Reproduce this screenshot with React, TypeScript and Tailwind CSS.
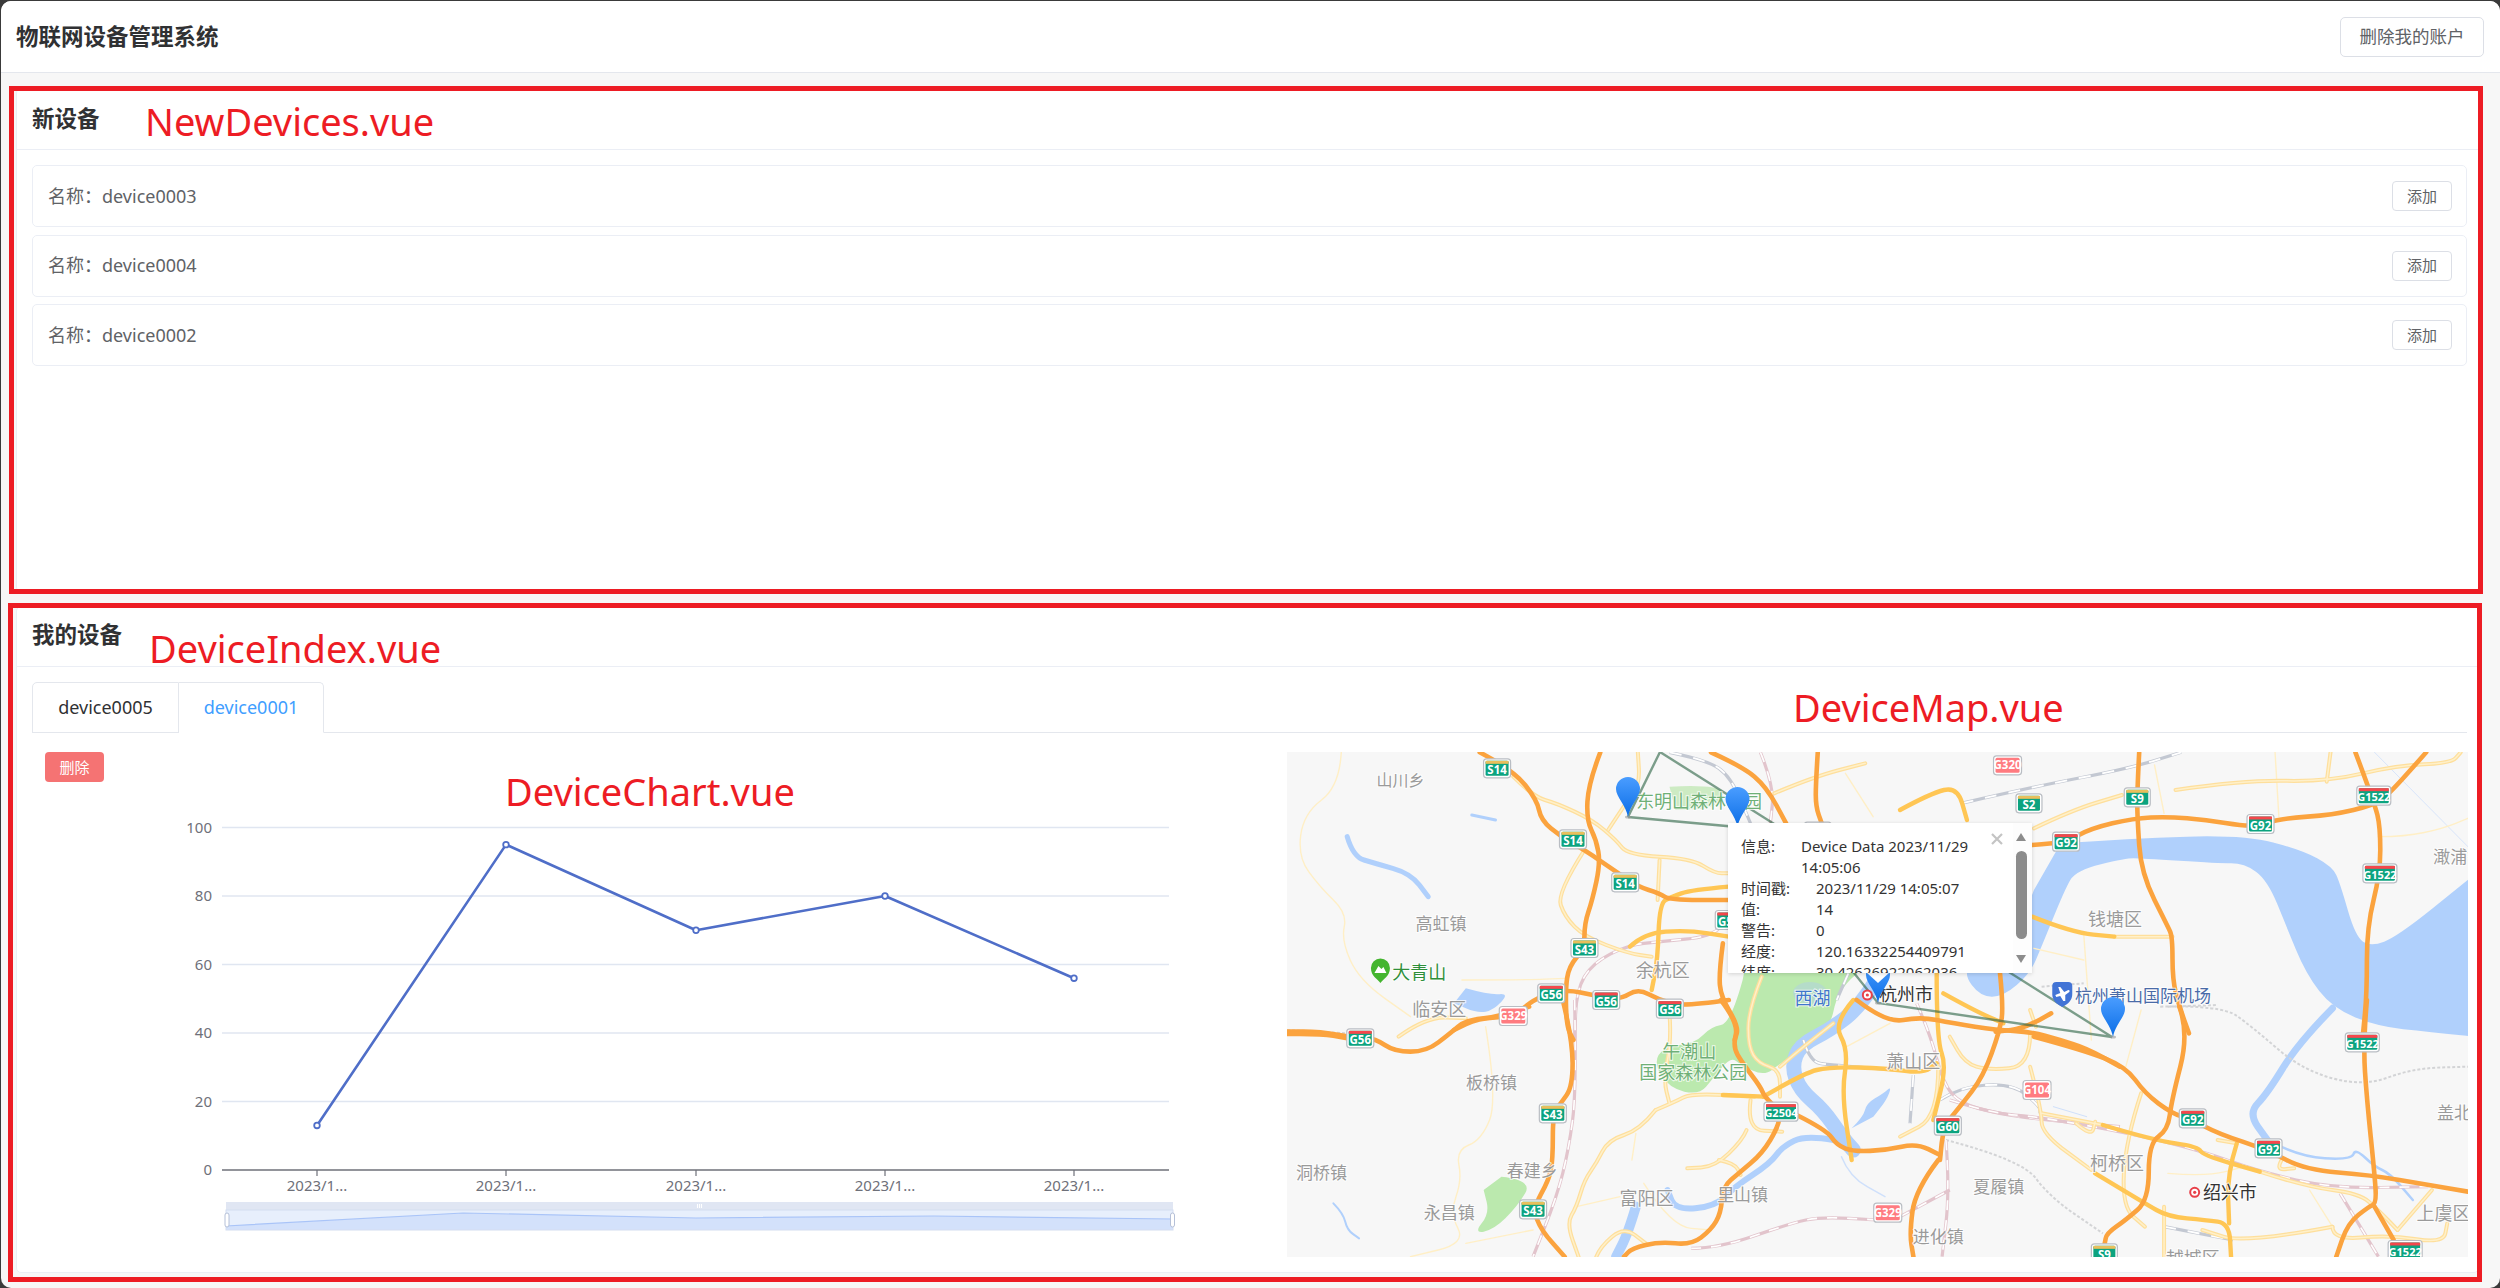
import React from "react";

type Q = 5 | 6 | 7 | 8 | 12;
const conv = (q: Q, x: number, y: number): [number, number] => {
  if (q === 5) return [1280 + x / 2.529, 740 + y / 3];
  if (q === 6) return [1900 + x / 2.613, 740 + y / 3];
  if (q === 7) return [1280 + x / 2.529, 1000 + y / 3];
  if (q === 8) return [1900 + x / 2.613, 1000 + y / 3];
  return [1720 + x / 3, 960 + y / 3];
};
const pts = (q: Q, s: string) =>
  s.trim().split(/\s+/).map((p) => {
    const [a, b] = p.split(",").map(Number);
    return conv(q, a, b);
  });
const smooth = (q: Q, s: string) => {
  const p = pts(q, s);
  if (p.length < 3) return `M${p.map((a) => a.join(" ")).join("L")}`;
  let d = `M${p[0][0]} ${p[0][1]}`;
  for (let i = 1; i < p.length - 1; i++) {
    const mx = (p[i][0] + p[i + 1][0]) / 2;
    const my = (p[i][1] + p[i + 1][1]) / 2;
    d += `Q${p[i][0]} ${p[i][1]} ${mx} ${my}`;
  }
  const l = p[p.length - 1];
  return d + `L${l[0]} ${l[1]}`;
};
const closed = (q: Q, s: string) => smooth(q, s) + "Z";

type R = [Q, string];
const orange: R[] = [
  [5, "505,37 590,90 650,180 660,240 710,290 770,330 850,395 905,440 960,460 985,480 1135,480"],
  [5, "810,37 780,130 775,240 800,300 810,370 790,480 770,550 770,625 730,680 722,750 725,860 742,900"],
  [7, "715,0 740,120 740,260 710,310 690,340 690,480 680,540 640,625 660,690 720,770"],
  [5, "1135,780 1020,800 960,780 905,745 860,780 790,765 730,750 686,760 640,780 590,830 500,835 440,870"],
  [7, "630,20 560,50 470,60 430,100 370,155 290,155 240,115 200,115 100,95 18,95"],
  [5, "1090,37 1170,80 1230,140 1280,250"],
  [5, "1360,37 1355,130 1355,200 1370,250"],
  [5, "1120,610 1110,700 1115,770 1160,860 1150,900"],
  [7, "1115,0 1160,70 1145,140 1170,190 1215,260 1225,290 1265,335 1260,380 1220,460 1160,520 1120,560 1115,640 1090,690 1040,735 960,725 890,745 870,770"],
  [12, "230,465 320,510 350,555 400,575 500,570 590,550 660,585"],
  [12, "410,120 500,190 600,170 700,190 830,210 930,215 1020,240 1100,265 1200,320"],
  [8, "350,110 480,150 590,200 640,280 710,340 765,360 830,400 960,450 1060,510 1230,525 1380,555 1484,575"],
  [12, "840,40 850,140 840,210 790,350 720,440 670,500 660,600"],
  [8, "100,480 40,570 25,700 35,770"],
  [8, "395,40 330,85 250,95"],
  [6, "345,315 400,310 435,305 500,265 610,235 700,230 800,240 900,258 940,255 1000,235 1130,225 1240,195 1280,160 1375,37"],
  [6, "625,37 620,150 620,230 630,400 700,560 712,590 712,720 730,800 755,880"],
  [8, "730,20 755,100 710,300 700,390 650,430 650,600 590,660 540,700 535,730"],
  [6, "1190,37 1240,190 1255,260 1255,400 1220,560 1220,760 1210,880"],
  [8, "1220,0 1210,130 1220,300 1240,520 1245,610 1225,620 1170,670 1140,770"],
  [8, "1240,620 1290,720"],
  [5, "18,882 100,880 170,895"],
];
const yellow: R[] = [
  [5, "1135,440 1040,450 990,470 960,490 955,660 940,750"],
  [5, "885,620 920,580 1030,570 1135,590"],
  [6, "0,210 80,160 150,140 175,240"],
  [6, "345,530 450,578 560,590"],
  [12, "400,120 340,190 385,270 365,400 395,600"],
  [12, "650,40 650,240 680,320 640,480"],
  [12, "130,410 250,340 330,320 500,325 610,340 650,310"],
  [12, "670,100 760,150 850,190"],
  [8, "510,520 640,610 700,650 800,660 860,670 865,770"],
  [8, "880,430 855,520 860,670"],
  [8, "530,375 660,420 780,440 790,465 940,515"],
  [7, "1225,290 1120,285"],
];
const pale: R[] = [
  [5, "590,110 640,170 700,190 790,240 850,300 880,345 1040,355 1100,400 1135,400"],
  [5, "770,330 700,460 720,530 770,590 880,640 940,650"],
  [5, "830,270 880,180 910,130 905,37"],
  [5, "1250,160 1350,110 1480,70"],
  [5, "960,360 955,480"],
  [7, "300,110 370,50 470,55"],
  [6, "350,265 450,210 580,165"],
  [6, "720,150 900,120 1120,125 1300,75 1440,70 1465,37"],
  [6, "1115,125 1125,37"],
  [6, "560,590 712,590"],
  [7, "950,330 910,390 830,420 800,490 770,540 750,620 725,670 755,770"],
  [7, "950,330 1000,305 1040,280 1200,290"],
  [7, "1190,300 1180,390 1270,395"],
  [7, "1180,390 1170,420 1100,500 1030,505"],
  [7, "1110,480 1150,490 1165,525"],
  [7, "800,770 810,740 870,680 925,730"],
  [7, "985,40 990,120 970,240 985,310"],
  [12, "125,50 85,150 85,260 115,310 180,330 180,410"],
  [12, "340,190 250,260 180,320"],
  [8, "340,100 340,200 230,210 170,190 130,110"],
  [8, "340,200 370,330 370,400 500,510"],
  [8, "100,200 100,350 0,410"],
  [8, "370,340 530,375"],
  [8, "1130,680 900,730 790,690"],
  [8, "690,620 690,770"],
  [8, "630,280 590,420 580,620 640,680"],
  [8, "830,420 880,430"],
  [8, "1000,475 980,510 1030,505"],
  [8, "940,515 1060,560 1200,580 1250,630 1300,690"],
  [8, "1390,570 1300,690"],
  [8, "1130,680 1130,720 1280,705 1420,730 1430,670"],
  [8, "460,370 500,410 510,365"],
  [8, "340,30 355,80"],
];
const minor: R[] = [
  [5, "155,37 150,140 60,220 45,350 100,440 170,520 155,600 200,720 330,830"],
  [5, "460,720 620,720 720,715"],
  [7, "520,80 550,300 510,420 445,450 460,540 430,640 470,730 330,770"],
  [7, "470,730 640,690"],
  [7, "860,590 750,620"],
  [7, "890,480 900,400"],
  [7, "920,550 990,680 1090,690"],
  [6, "350,625 480,660"],
  [6, "480,580 500,900"],
  [6, "665,75 690,220"],
  [6, "980,37 990,230"],
  [6, "1250,290 1320,290 1420,265 1484,235"],
  [8, "1070,570 1130,680"],
  [8, "630,30 590,200"],
  [8, "700,520 800,530 900,500"],
  [12, "510,190 380,260"],
  [5, "1430,100 1500,230"],
];
const pink: R[] = [
  [5, "1215,37 1250,140 1240,250"],
  [5, "1110,565 1090,590 960,605 880,615 790,670 750,750 745,895"],
  [7, "745,0 750,270 730,450 700,590 640,770"],
  [7, "1040,745 1110,745 1290,670 1370,650 1510,660"],
  [12, "590,130 630,220 670,370 720,430 830,460 970,480 1200,500"],
  [8, "130,300 240,340 360,350 600,400 780,450 940,515 1130,565 1380,560"],
  [8, "120,420 130,570 110,770"],
  [8, "0,650 130,570"],
  [8, "1150,580 1250,770"],
];
const gray: R[] = [
  [6, "160,190 350,140 600,85 735,37"],
  [5, "985,37 1080,60 1140,110 1190,250"],
  [12, "385,40 350,120"],
  [12, "250,240 270,305 330,315 600,335"],
  [12, "580,345 570,490"],
  [12, "660,420 720,380 880,370 960,440 960,460"],
  [8, "690,680 870,720"],
];
const border: R[] = [
  [8, "680,20 840,15 920,80 1050,210 1210,260 1340,205 1484,200"],
  [8, "120,420 320,480 390,590 530,700"],
  [6, "370,740 480,730"],
  [6, "700,800 830,795"],
  [5, "18,870 170,880"],
];
const bigRiver =
  "420,310 600,295 900,285 1050,330 1130,380 1150,430 1190,590 1230,620 1300,590 1484,420 1580,330 1580,900 1380,875 1250,860 1130,805 1060,700 1010,560 960,420 900,370 830,370 630,355 590,355 460,390 430,450 370,620 340,700 270,770 210,770 165,700 200,660 300,600 350,450";
const rivers: [Q, string, number][] = [
  [12, "470,60 420,140 330,210 240,255 215,320 240,390 310,450 365,530 400,570", 15],
  [7, "1400,420 1330,405 1270,440 1240,490 1150,560 1100,620 1000,630 980,570", 6],
  [7, "900,620 880,700 850,770", 10],
  [8, "1130,25 1040,130 960,280 910,340 960,420", 7],
  [8, "960,420 1040,470 1180,480 1190,445 1240,500 1280,520 1340,600", 2.5],
  [5, "170,290 185,350 240,370 330,400 375,470", 5],
  [7, "135,610 160,640 170,690 200,715", 2],
  [5, "485,225 545,240", 3],
  [7, "1420,470 1440,530 1530,590", 1.5],
  [6, "1240,37 1484,320", 0.8],
  [12, "1000,440 1100,470", 1],
];
const waterPolys: [Q, string][] = [
  [5, "470,745 530,765 580,760 540,810 500,820 440,790"],
  [12, "395,505 430,470 440,430 490,400 515,378 500,420 460,470"],
];
const greens: [Q, string][] = [
  [5, "985,140 1060,135 1130,150 1100,205 1000,210"],
  [7, "1170,-60 1140,70 1090,80 1050,130 970,140 945,190 985,265 1060,285 1095,235 1140,170 1165,195 1225,228 1265,190 1390,95 1410,-30 1500,-120 1180,-120"],
  [7, "560,530 640,540 600,620 540,690 490,700 530,640 515,570"],
];

type L = [Q, number, number, string, number, string];
const G = "#9a9a9a";
const GR = "#6fb077";
const labels: L[] = [
  [5, 305, 120, "山川乡", 16, G],
  [5, 1060, 185, "东明山森林公园", 18, GR],
  [5, 407, 553, "高虹镇", 17, G],
  [5, 352, 697, "大青山", 18, "#2f8f3a"],
  [5, 403, 810, "临安区", 18, G],
  [5, 968, 692, "余杭区", 18, G],
  [5, 1347, 775, "西湖", 18, "#3f76cc"],
  [12, 558, 105, "杭州市", 18, "#333333"],
  [6, 635, 767, "杭州萧山国际机场", 17, "#4a6ba8"],
  [6, 562, 540, "钱塘区", 18, G],
  [12, 660, -60, "临平区", 18, G],
  [6, 1460, 352, "澉浦镇", 17, G],
  [8, 1470, 338, "盖北镇", 17, G],
  [7, 1035, 155, "午潮山", 18, GR],
  [7, 1045, 218, "国家森林公园", 18, GR],
  [7, 535, 250, "板桥镇", 17, G],
  [7, 105, 518, "洞桥镇", 17, G],
  [7, 638, 513, "春建乡", 17, G],
  [7, 428, 640, "永昌镇", 17, G],
  [7, 927, 597, "富阳区", 18, G],
  [7, 1170, 585, "里山镇", 17, G],
  [12, 580, 305, "萧山区", 18, G],
  [8, 567, 492, "柯桥区", 18, G],
  [8, 258, 560, "夏履镇", 17, G],
  [8, 100, 710, "进化镇", 17, G],
  [8, 862, 577, "绍兴市", 18, "#333333"],
  [8, 1420, 640, "上虞区", 18, G],
  [8, 765, 775, "越城区", 18, G],
];

type S = [Q, number, number, string, "r" | "y" | "p"];
const shields: S[] = [
  [5, 549, 85, "S14", "y"],
  [5, 741, 298, "S14", "y"],
  [5, 873, 427, "S14", "y"],
  [5, 770, 624, "S43", "y"],
  [5, 686, 760, "G56", "r"],
  [5, 825, 780, "G56", "r"],
  [5, 986, 806, "G56", "r"],
  [7, 203, 115, "G56", "r"],
  [5, 590, 828, "G329", "p"],
  [5, 1135, 540, "G56", "r"],
  [5, 1360, 275, "G92", "r"],
  [6, 281, 76, "G320", "p"],
  [6, 337, 190, "S2", "y"],
  [6, 620, 172, "S9", "y"],
  [6, 434, 305, "G92", "r"],
  [6, 942, 252, "G92", "r"],
  [6, 1238, 167, "G1522", "r"],
  [6, 1254, 400, "G1522", "r"],
  [7, 690, 340, "S43", "y"],
  [7, 640, 628, "S43", "y"],
  [7, 1267, 335, "G2504", "r"],
  [7, 1537, 638, "G329", "p"],
  [8, 1208, 127, "G1522", "r"],
  [8, 358, 270, "G104", "p"],
  [8, 125, 377, "G60", "r"],
  [8, 765, 355, "G92", "r"],
  [8, 963, 445, "G92", "r"],
  [8, 534, 760, "S9", "y"],
  [8, 1320, 750, "G1522", "r"],
];

const Shield = ({ s }: { s: S }) => {
  const [x, y] = conv(s[0], s[1], s[2]);
  const w = s[3].length >= 5 ? 34 : s[3].length === 4 ? 28 : s[3].length === 3 ? 27 : 26;
  const h = 19;
  const pink = s[4] === "p";
  return (
    <g>
      <rect x={x - w / 2} y={y - h / 2} width={w} height={h} rx={3} fill="#fff" stroke="#b9bdc3" strokeWidth={1.2} />
      <rect x={x - w / 2 + 2} y={y - h / 2 + 2} width={w - 4} height={h - 4} rx={1.5} fill={pink ? "#ff7b80" : "#0ca37f"} />
      {!pink && <rect x={x - w / 2 + 2} y={y - h / 2 + 2} width={w - 4} height={3} fill={s[4] === "r" ? "#f5474c" : "#e8bf5c"} />}
      <text x={x} y={y + (pink ? 4 : 5.5)} textAnchor="middle" fontSize={s[3].length >= 5 ? 11 : 11.5} fontWeight={700} fill="#fff">
        {s[3]}
      </text>
    </g>
  );
};

const Pin = ({ x, y }: { x: number; y: number }) => (
  <g>
    <ellipse cx={x} cy={y} rx={3} ry={1.5} fill="#9a9a9a" opacity={0.6} />
    <path
      d={`M${x} ${y}C${x - 2} ${y - 12} ${x - 12} ${y - 20} ${x - 12} ${y - 28}A12 12 0 1 1 ${x + 12} ${y - 28}C${x + 12} ${y - 20} ${x + 2} ${y - 12} ${x} ${y}Z`}
      fill="url(#pin)"
    />
  </g>
);

const Roads = ({ list, color, w }: { list: R[]; color: string; w: number }) => (
  <g fill="none" stroke={color} strokeWidth={w} strokeLinecap="round" strokeLinejoin="round">
    {list.map((r, i) => (
      <path key={i} d={smooth(r[0], r[1])} />
    ))}
  </g>
);

const MapDrawing = () => {
  const ring = (q: Q, a: number, b: number) => {
    const [x, y] = conv(q, a, b);
    return (
      <g>
        <circle cx={x} cy={y} r={4.5} fill="#fff" stroke="#e8414a" strokeWidth={2} />
        <circle cx={x} cy={y} r={1.6} fill="#e8414a" />
      </g>
    );
  };
  const [gx, gy] = conv(5, 254, 693);
  const [ax, ay] = conv(6, 424, 762);
  return (
    <svg viewBox="1287 752 1181 505" width={1181} height={505} className="block font-['Noto_Sans','Noto_Sans_CJK_SC',sans-serif]">
      <defs>
        <linearGradient id="pin" x1="0" y1="0" x2="0" y2="1">
          <stop offset="0" stopColor="#4a9dff" />
          <stop offset="1" stopColor="#0b6de6" />
        </linearGradient>
      </defs>
      <rect x={1287} y={752} width={1181} height={505} fill="#f7f7f7" />
      {greens.map((g, i) => (
        <path key={i} d={closed(g[0], g[1])} fill={i === 0 ? "#cdebc3" : "#bbe9ae"} />
      ))}
      <ellipse cx={1810} cy={993} rx={17} ry={11} fill="#b5dcc9" />
      <path d={closed(6, bigRiver)} fill="#b0d0fc" />
      {rivers.map((r, i) => (
        <path key={i} d={smooth(r[0], r[1])} fill="none" stroke={r[2] < 2 ? "#cfe0fb" : "#b0d0fc"} strokeWidth={r[2]} strokeLinejoin="round" strokeLinecap="round" />
      ))}
      {waterPolys.map((g, i) => (
        <path key={i} d={closed(g[0], g[1])} fill="#b0d0fc" />
      ))}
      <Roads list={minor} color="#ffefc6" w={1.4} />
      <g fill="none" stroke="#d3d4d6" strokeWidth={2} strokeDasharray="3 2">
        {border.map((r, i) => (
          <path key={i} d={smooth(r[0], r[1])} />
        ))}
      </g>
      <g fill="none" strokeLinejoin="round">
        {gray.map((r, i) => (
          <g key={i}>
            <path d={smooth(r[0], r[1])} stroke="#c3c8d2" strokeWidth={3.2} />
            <path d={smooth(r[0], r[1])} stroke="#fff" strokeWidth={1.8} strokeDasharray="12 12" />
          </g>
        ))}
        {pink.map((r, i) => (
          <g key={i}>
            <path d={smooth(r[0], r[1])} stroke="#e2c4cc" strokeWidth={3.2} />
            <path d={smooth(r[0], r[1])} stroke="#fff" strokeWidth={1.6} strokeDasharray="10 10" />
          </g>
        ))}
      </g>
      <Roads list={pale} color="#fedf9c" w={4} />
      <Roads list={pale} color="#fff0c9" w={1.5} />
      <Roads list={yellow} color="#ffc654" w={4.4} />
      <Roads list={orange} color="#fba33e" w={4.6} />
      <polyline
        points="1628,817 1660,752 2112,1037 1878,1003 1737,827 1628,817"
        fill="none"
        stroke="#2f6647"
        strokeOpacity={0.62}
        strokeWidth={2.4}
      />
      {labels.map((l, i) => {
        const [x, y] = conv(l[0], l[1], l[2]);
        return (
          <text key={i} x={x} y={y + l[4] * 0.36} textAnchor="middle" fontSize={l[4]} fill={l[5]} stroke="#ffffff" strokeWidth={2} paintOrder="stroke" strokeOpacity={0.75}>
            {l[3]}
          </text>
        );
      })}
      {shields.map((s, i) => (
        <Shield key={i} s={s} />
      ))}
      {ring(12, 442, 105)}
      {ring(8, 770, 577)}
      <path
        d={`M${gx} ${gy + 12}C${gx - 3} ${gy + 8} ${gx - 9.5} ${gy + 5} ${gx - 9.5} ${gy - 3}A9.5 9.5 0 1 1 ${gx + 9.5} ${gy - 3}C${gx + 9.5} ${gy + 5} ${gx + 3} ${gy + 8} ${gx} ${gy + 12}Z`}
        fill="#44b52f"
      />
      <path d={`M${gx - 6} ${gy + 2}L${gx - 2} ${gy - 5}L${gx + 1} ${gy - 2}L${gx + 3} ${gy - 4}L${gx + 6} ${gy + 2}Z`} fill="#fff" />
      <path
        d={`M${ax} ${ay + 13}C${ax - 6} ${ay + 10} ${ax - 10} ${ay + 6} ${ax - 10} ${ay}V${ay - 8}Q${ax - 10} ${ay - 12} ${ax - 6} ${ay - 12}H${ax + 6}Q${ax + 10} ${ay - 12} ${ax + 10} ${ay - 8}V${ay}C${ax + 10} ${ay + 6} ${ax + 6} ${ay + 10} ${ax} ${ay + 13}Z`}
        fill="#4274d6"
      />
      <path
        d={`M${ax - 7} ${ay + 1}L${ax - 2} ${ay - 1}L${ax - 4} ${ay - 7}L${ax - 2} ${ay - 7}L${ax + 2} ${ay - 2}L${ax + 6} ${ay - 4}Q${ax + 8} ${ay - 4} ${ax + 7} ${ay - 2}L${ax + 3} ${ay + 1}L${ax + 3} ${ay + 7}L${ax + 1} ${ay + 7}L${ax - 2} ${ay + 2}L${ax - 6} ${ay + 3}Z`}
        fill="#fff"
      />
      <Pin x={1628} y={817} />
      <Pin x={1737.5} y={827} />
      <Pin x={1878} y={1003} />
      <Pin x={2113} y={1037} />
      <polygon points="1866,972 1890,972 1878,983" fill="#fff" />
    </svg>
  );
};

const Popup = () => {
  const rows: [string, string][] = [
    ["时间戳:", "2023/11/29 14:05:07"],
    ["值:", "14"],
    ["警告:", "0"],
    ["经度:", "120.16332254409791"],
    ["纬度:", "30.42626922062036"],
  ];
  return (
    <div className="absolute left-[441px] top-[71px] w-[304px] h-[150px] bg-white shadow-[0_1px_4px_rgba(0,0,0,0.15)] overflow-hidden text-[15px] leading-[21px] text-[#333]">
      <div className="w-[280px] pl-[13px] pt-[13px]">
        <div className="flex">
          <div className="w-[60px] shrink-0">信息:</div>
          <div className="w-[180px]">Device Data 2023/11/29 14:05:06</div>
        </div>
        {rows.map((r) => (
          <div className="flex" key={r[0]}>
            <div className="w-[75px] shrink-0">{r[0]}</div>
            <div>{r[1]}</div>
          </div>
        ))}
      </div>
      <svg className="absolute left-[263px] top-[10px]" width={12} height={12} viewBox="0 0 12 12">
        <path d="M1 1L11 11M11 1L1 11" stroke="#c4c4c4" strokeWidth={2.2} />
      </svg>
      <div className="absolute right-0 top-0 bottom-0 w-[19px] bg-[#fdfdfd]">
        <div className="absolute left-[3px] top-[10px] w-0 h-0 border-l-[5.5px] border-r-[5.5px] border-b-[8px] border-l-transparent border-r-transparent border-b-[#8c8c8c]" />
        <div className="absolute left-[3px] top-[28px] w-[11px] h-[88px] rounded-[6px] bg-[#8c8c8c]" />
        <div className="absolute left-[3px] top-[132px] w-0 h-0 border-l-[5.5px] border-r-[5.5px] border-t-[8px] border-l-transparent border-r-transparent border-t-[#8c8c8c]" />
      </div>
    </div>
  );
};

const Chart = () => {
  const data: [number, number][] = [
    [317, 13],
    [506, 95],
    [696, 70],
    [885, 80],
    [1074, 56],
  ];
  const yOf = (v: number) => 1170 - v * 3.425;
  const spark = "226,1226 463,1213 696,1218 934,1216 1173,1219";
  return (
    <svg viewBox="150 782 1050 470" width={1050} height={470} className="block ml-[118px] font-['Noto_Sans',sans-serif]">
      {[20, 40, 60, 80, 100].map((v) => (
        <line key={v} x1={222} x2={1169} y1={yOf(v)} y2={yOf(v)} stroke="#e0e6f1" strokeWidth={1.4} />
      ))}
      {[0, 20, 40, 60, 80, 100].map((v) => (
        <text key={v} x={212} y={yOf(v) + 5} textAnchor="end" fontSize={15} fill="#6e7079">
          {v}
        </text>
      ))}
      <line x1={222} x2={1169} y1={1170} y2={1170} stroke="#6e7079" strokeWidth={1.4} />
      {data.map((d) => (
        <g key={d[0]}>
          <line x1={d[0]} x2={d[0]} y1={1170} y2={1176} stroke="#6e7079" strokeWidth={1.2} />
          <text x={d[0]} y={1191} textAnchor="middle" fontSize={15} fill="#6e7079">
            2023/1...
          </text>
        </g>
      ))}
      <polyline points={data.map((d) => `${d[0]},${yOf(d[1])}`).join(" ")} fill="none" stroke="#4f6ec8" strokeWidth={2.6} strokeLinejoin="bevel" />
      {data.map((d) => (
        <circle key={d[0]} cx={d[0]} cy={yOf(d[1])} r={2.8} fill="#fff" stroke="#4f6ec8" strokeWidth={1.8} />
      ))}
      <rect x={226} y={1202} width={947} height={8} fill="#e0e6f3" />
      <rect x={226} y={1210} width={947} height={20} fill="#e7effc" />
      <polygon points={`226,1230 ${spark} 1173,1230`} fill="#d3e1fb" />
      <polyline points={spark} fill="none" stroke="#a9c4f8" strokeWidth={1.2} />
      <rect x={226} y={1210} width={947} height={20} fill="none" stroke="#d4ddf0" strokeWidth={1} />
      <path d="M697.5 1204V1208M699.5 1204V1208M701.5 1204V1208" stroke="#fff" strokeWidth={1.1} />
      <rect x={225} y={1213} width={4} height={14} rx={2} fill="#fff" stroke="#b5c0d8" strokeWidth={1} />
      <rect x={1170.5} y={1213} width={4} height={14} rx={2} fill="#fff" stroke="#b5c0d8" strokeWidth={1} />
    </svg>
  );
};

const Row = ({ name }: { name: string }) => (
  <div className="h-[62px] flex items-center justify-between pl-[15px] pr-[14px] border border-[#ebeef5] rounded-[5px] bg-white text-[18px] text-[#606266]">
    <span>名称：{name}</span>
    <button className="w-[60px] h-[30px] border border-[#dcdfe6] rounded-[4px] text-[15px] text-[#606266] bg-white">添加</button>
  </div>
);

const Note = ({ cls, children }: { cls: string; children: string }) => (
  <div className={"absolute text-[#ed1c24] text-[38px] leading-none " + cls}>{children}</div>
);

export default function App() {
  return (
    <div className="relative w-[2500px] h-[1288px] overflow-hidden bg-[#3a3a3a] pt-px pl-px font-['Noto_Sans','Noto_Sans_CJK_SC',sans-serif]">
      <div className="w-[2499px] h-[1287px] rounded-[10px] overflow-hidden bg-[#f7f7f7] flex flex-col">
        <header className="h-[72px] shrink-0 bg-white border-b border-[#e4e7ed] flex items-center justify-between pl-[15px] pr-[16px]">
          <h1 className="text-[22.5px] font-bold text-[#303133]">物联网设备管理系统</h1>
          <button className="w-[144px] h-[40px] border border-[#dcdfe6] rounded-[5px] bg-white text-[17.5px] text-[#606266]">删除我的账户</button>
        </header>
        <main className="flex-1 flex flex-col gap-[14px] pt-[15px] pl-[15px] pr-[21px]">
          <section className="h-[504px] shrink-0 bg-white border border-[#ebeef5] rounded-[5px]">
            <div className="h-[61px] border-b border-[#ebeef5] flex items-center pl-[15px] text-[22.5px] font-bold text-[#303133] leading-none">新设备</div>
            <div className="flex flex-col gap-[7.5px] pt-[15px] pl-[15px] pr-[11px]">
              <Row name="device0003" />
              <Row name="device0004" />
              <Row name="device0002" />
            </div>
          </section>
          <section className="h-[667px] shrink-0 bg-white border border-[#ebeef5] rounded-[5px]">
            <div className="h-[60px] border-b border-[#ebeef5] flex items-center pl-[15px] pb-[3px] text-[22.5px] font-bold text-[#303133] leading-none">我的设备</div>
            <div className="pl-[15px] pr-[10px] pt-[15px]">
              <div className="flex h-[51px] border-b border-[#e4e7ed] mr-px">
                <div className="w-[147px] h-[51px] flex items-center justify-center border border-[#e4e7ed] rounded-tl-[5px] text-[18px] text-[#303133]">device0005</div>
                <div className="w-[145px] h-[51px] flex items-center justify-center border-t border-r border-[#e4e7ed] border-b border-b-white rounded-tr-[5px] text-[18px] text-[#409eff]">device0001</div>
              </div>
              <div className="flex justify-between pt-[19px]">
                <div className="w-[1240px]">
                  <button className="block ml-[13px] w-[59px] h-[30px] rounded-[4px] bg-[#f56c6c] text-white text-[15px] opacity-95">删除</button>
                  <Chart />
                </div>
                <div className="relative w-[1181px] h-[505px]">
                  <MapDrawing />
                  <Popup />
                </div>
              </div>
            </div>
          </section>
        </main>
      </div>
      <div className="absolute left-[9px] top-[86px] w-[2474px] h-[508px] border-[5px] border-[#ed1c24]" />
      <div className="absolute left-[8px] top-[603px] w-[2474px] h-[679px] border-[5px] border-[#ed1c24]" />
      <Note cls="left-[145px] top-[102px]">NewDevices.vue</Note>
      <Note cls="left-[149px] top-[629px]">DeviceIndex.vue</Note>
      <Note cls="left-[505px] top-[772px]">DeviceChart.vue</Note>
      <Note cls="left-[1793px] top-[688px]">DeviceMap.vue</Note>
    </div>
  );
}
